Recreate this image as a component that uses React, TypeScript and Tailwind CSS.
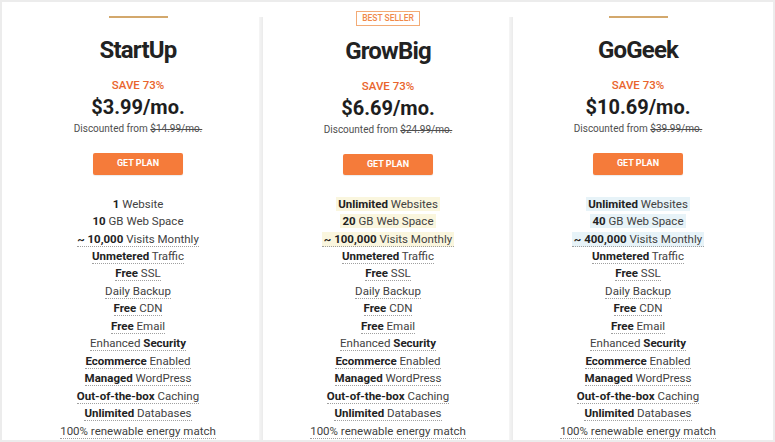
type Feature = { bold?: string; text?: string; boldAfter?: string; line?: boolean };

interface Plan {
    name: string;
    price: string;
    was: string;
    best?: boolean;
    hl?: string;
    features: Feature[];
}

const common: Feature[] = [
    { bold: "Unmetered", text: " Traffic", line: true },
    { bold: "Free", text: " SSL", line: true },
    { text: "Daily Backup", line: true },
    { bold: "Free", text: " CDN", line: true },
    { bold: "Free", text: " Email", line: true },
    { text: "Enhanced ", boldAfter: "Security", line: true },
    { bold: "Ecommerce", text: " Enabled", line: true },
    { bold: "Managed", text: " WordPress", line: true },
    { bold: "Out-of-the-box", text: " Caching", line: true },
    { bold: "Unlimited", text: " Databases", line: true },
    { text: "100% renewable energy match", line: true },
];

const plans: Plan[] = [
    {
        name: "StartUp",
        price: "$3.99/mo.",
        was: "$14.99/mo.",
        features: [
            { bold: "1", text: " Website" },
            { bold: "10", text: " GB Web Space" },
            { bold: "~ 10,000", text: " Visits Monthly", line: true },
            ...common,
        ],
    },
    {
        name: "GrowBig",
        price: "$6.69/mo.",
        was: "$24.99/mo.",
        best: true,
        hl: "bg-[#faf6de]",
        features: [
            { bold: "Unlimited", text: " Websites" },
            { bold: "20", text: " GB Web Space" },
            { bold: "~ 100,000", text: " Visits Monthly", line: true },
            ...common,
        ],
    },
    {
        name: "GoGeek",
        price: "$10.69/mo.",
        was: "$39.99/mo.",
        hl: "bg-[#e7f3f8]",
        features: [
            { bold: "Unlimited", text: " Websites" },
            { bold: "40", text: " GB Web Space" },
            { bold: "~ 400,000", text: " Visits Monthly", line: true },
            ...common,
        ],
    },
];

function PlanColumn({ plan, divider }: { plan: Plan; divider: boolean }) {
    return (
        <div
            className={
                divider
                    ? "w-[250px] flex flex-col items-center bg-[linear-gradient(to_right,#f5f5f5,#ebebeb)] bg-no-repeat bg-[length:4px_100%] bg-[position:right_15px]"
                    : "w-[250px] flex flex-col items-center"
            }
        >
            <div className="h-[14px] mt-[9px] flex items-center justify-center">
                {plan.best ? (
                    <span className="h-[15px] px-[5px] border border-[#f3ab76] text-[#f0894a] text-[8.5px] font-medium leading-[13px]">
                        BEST SELLER
                    </span>
                ) : (
                    <span className="block w-[59px] h-[2px] bg-[#d3a86c]" />
                )}
            </div>

            <h2 className="mt-[11px] text-[24px] leading-[30px] font-bold tracking-[-0.8px] text-[#222]">
                {plan.name}
            </h2>

            <p className="mt-[12px] text-[11.5px] leading-[16px] font-medium text-[#e9642d]">
                SAVE 73%
            </p>

            <p className="mt-[2px] text-[20px] leading-[24px] font-bold text-[#1e1e1e]">
                {plan.price}
            </p>

            <p className="mt-[3px] text-[10px] leading-[14px] text-[#4f4f4f]">
                Discounted from <span className="line-through">{plan.was}</span>
            </p>

            <button className="mt-[17px] w-[90px] h-[24px] rounded-[2px] bg-[#f57b3a] text-white text-[9px] font-bold shadow-[0_1px_1px_rgba(0,0,0,0.08)]">
                GET PLAN
            </button>

            <ul className="mt-[21px] text-center text-[11.5px] leading-[17.45px] text-[#424242]">
                {plan.features.map((f, i) => (
                    <li key={i}>
                        <span
                            className={
                                (f.line ? "border-b border-dotted border-[#a0a0a0] " : "") +
                                (plan.hl && i < 3 ? plan.hl + " px-[2px]" : "")
                            }
                        >
                            {f.bold && <b className="font-bold text-[#222]">{f.bold}</b>}
                            {f.text}
                            {f.boldAfter && <b className="font-bold text-[#222]">{f.boldAfter}</b>}
                        </span>
                    </li>
                ))}
            </ul>
        </div>
    );
}

export default function App() {
    return (
        <div
            className="w-[775px] h-[442px] bg-[#ececec] p-[2px] overflow-hidden"
            style={{ fontFamily: "Roboto, 'Liberation Sans', sans-serif" }}
        >
            <div className="h-full bg-white pl-[11px] flex">
                {plans.map((p, i) => (
                    <PlanColumn key={p.name} plan={p} divider={i < 2} />
                ))}
            </div>
        </div>
    );
}
